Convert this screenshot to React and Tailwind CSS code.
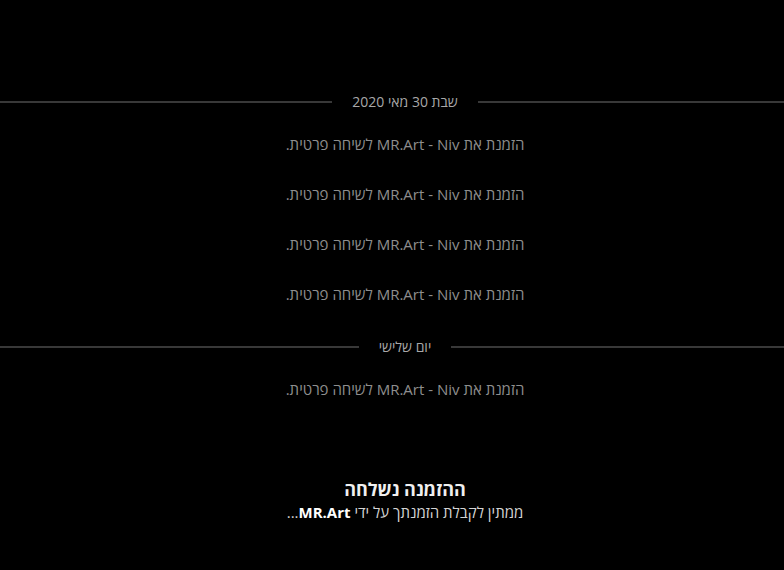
import React from 'react';

const days = [
  { label: 'שבת 30 מאי 2020', count: 4 },
  { label: 'יום שלישי', count: 1 },
];

const Separator = ({ label }) => (
  <div className="flex items-center h-5">
    <div className="flex-1 h-[2px] bg-[#383838]" />
    <span className="px-5 text-[14px] leading-5 text-[#a8a8a8]">{label}</span>
    <div className="flex-1 h-[2px] bg-[#383838]" />
  </div>
);

const SystemMessage = () => (
  <div className="h-5 text-center text-[15px] leading-5 text-[#8e8e8e]">
    הזמנת את MR.Art - Niv לשיחה פרטית.
  </div>
);

export default function App() {
  return (
    <div
      className="h-[570px] w-full overflow-hidden bg-black"
      style={{ fontFamily: '"Open Sans", "DejaVu Sans", sans-serif' }}
    >
      <div dir="rtl" className="w-[810px] pt-[92px] flex flex-col">
        {days.map((day, i) => (
          <div key={day.label} className={i === 0 ? '' : 'mt-[33px]'}>
            <Separator label={day.label} />
            <div className="mt-[22px] flex flex-col gap-[30px]">
              {Array.from({ length: day.count }).map((_, j) => (
                <SystemMessage key={j} />
              ))}
            </div>
          </div>
        ))}

        {/* Invitation status */}
        <div className="mt-[79px] text-center">
          <div className="text-[18px] leading-[22px] font-bold text-[#f0f0f0]">ההזמנה נשלחה</div>
          <div className="mt-[2px] text-[15px] leading-5 text-[#d4d4d4]">
            ממתין לקבלת הזמנתך על ידי <span className="font-bold text-white">MR.Art</span>...
          </div>
        </div>
      </div>
    </div>
  );
}
